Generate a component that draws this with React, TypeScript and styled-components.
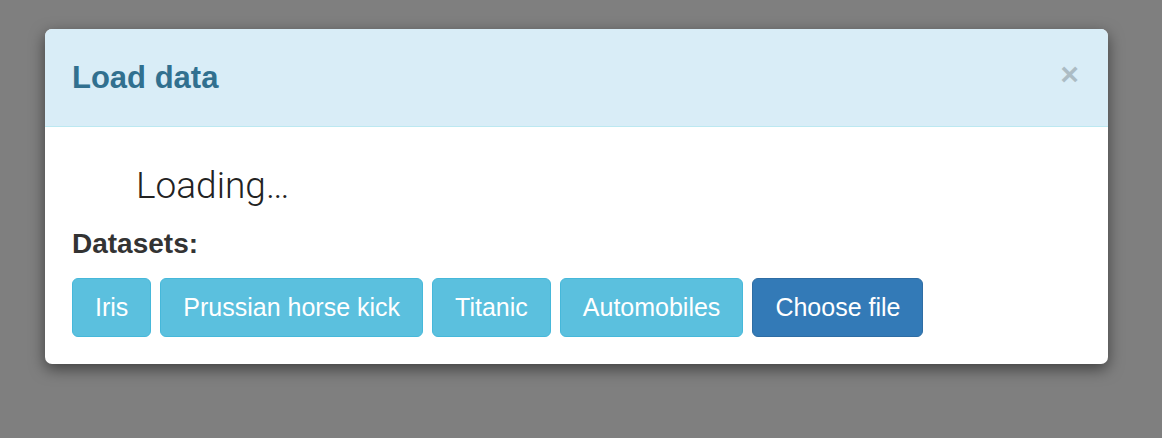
import styled, { createGlobalStyle } from 'styled-components';

const GlobalStyle = createGlobalStyle`
  html, body {
    margin: 0;
    padding: 0;
    background: #7f7f7f;
    height: 100%;
  }
  body {
    font-family: "Liberation Sans", Arial, sans-serif;
    color: #333;
  }
`;

const Backdrop = styled.div`
  padding: 29px 0 0 45px;
`;

const Modal = styled.div`
  width: 1063px;
  background: #fff;
  border-radius: 7px;
  box-shadow: 0 5px 15px rgba(0, 0, 0, 0.5);
  overflow: hidden;
`;

const Header = styled.div`
  height: 97px;
  display: flex;
  align-items: center;
  justify-content: space-between;
  padding: 0 29px 0 27px;
  background: #d9edf7;
  border-bottom: 1px solid #bce8f1;
`;

const Title = styled.h4`
  margin: 0;
  font-size: 31px;
  font-weight: 700;
  color: #31708f;
`;

const Close = styled.button`
  border: 0;
  background: none;
  padding: 0;
  font-family: "Liberation Sans", Arial, sans-serif;
  font-size: 32px;
  font-weight: 700;
  line-height: 1;
  color: #000;
  opacity: 0.2;
  margin-top: -8px;
  cursor: pointer;
`;

const Body = styled.div`
  padding: 38px 27px 27px;
`;

const Loading = styled.div`
  margin-left: 64px;
  font-family: Roboto, "Liberation Sans", sans-serif;
  font-weight: 300;
  font-size: 37px;
  line-height: 42px;
  color: #222;
`;

const Label = styled.div`
  margin-top: 20px;
  font-size: 28px;
  font-weight: 700;
  line-height: 34px;
  color: #333;
`;

const Buttons = styled.div`
  display: flex;
  gap: 9px;
  margin-top: 17px;
`;

const Btn = styled.button<{ $primary?: boolean }>`
  height: 59px;
  padding: 0 22px;
  font-family: "Liberation Sans", Arial, sans-serif;
  font-size: 25px;
  color: #fff;
  border-radius: 6px;
  border: 1.5px solid ${p => (p.$primary ? '#2e6da4' : '#46b8da')};
  background: ${p => (p.$primary ? '#337ab7' : '#5bc0de')};
  cursor: pointer;
`;

const datasets = ['Iris', 'Prussian horse kick', 'Titanic', 'Automobiles'];

export default function App() {
  return (
    <>
      <GlobalStyle />
      <Backdrop>
        <Modal>
          <Header>
            <Title>Load data</Title>
            <Close aria-label='Close'>×</Close>
          </Header>
          <Body>
            <Loading>Loading…</Loading>
            <Label>Datasets:</Label>
            <Buttons>
              {datasets.map(d => (
                <Btn key={d}>{d}</Btn>
              ))}
              <Btn $primary>Choose file</Btn>
            </Buttons>
          </Body>
        </Modal>
      </Backdrop>
    </>
  );
}
